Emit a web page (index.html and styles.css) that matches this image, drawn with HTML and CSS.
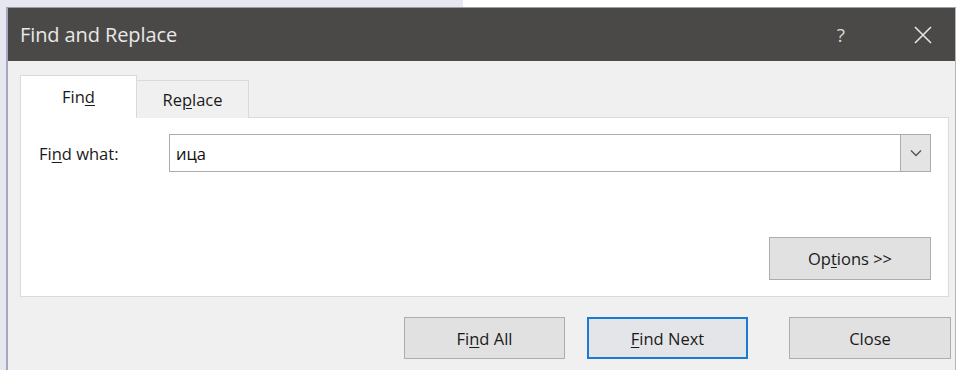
FILE: index.html
```html
<!DOCTYPE html>
<html>
<head>
<meta charset="utf-8">
<link rel="stylesheet" href="styles.css">
</head>
<body>
<div class="top">
  <div class="top-left"></div>
  <div class="top-right"></div>
</div>
<div class="frame">
  <div class="lside"></div>
  <div class="dialog">
    <div class="titlebar">
      <span class="title">Find and Replace</span>
      <span class="help">?</span>
      <svg class="close-x" width="20" height="20" viewBox="0 0 20 20">
        <path d="M2 2 L18 18 M18 2 L2 18" stroke="#e6e6e6" stroke-width="1.6" fill="none"/>
      </svg>
    </div>
    <div class="content">
      <div class="tabs">
        <div class="tab active">Fin<u>d</u></div>
        <div class="tab">Re<u>p</u>lace</div>
      </div>
      <div class="panel">
        <div class="find-row">
          <label class="label">Fi<u>n</u>d what:</label>
          <div class="combo">
            <span class="combo-text">ица</span>
            <div class="combo-btn">
              <svg width="12" height="8" viewBox="0 0 12 8">
                <path d="M1 1.5 L6 6.5 L11 1.5" stroke="#555" stroke-width="1.4" fill="none"/>
              </svg>
            </div>
          </div>
        </div>
        <div class="options-row">
          <button class="btn options">Op<u>t</u>ions &gt;&gt;</button>
        </div>
      </div>
      <div class="actions">
        <button class="btn find-all">Fi<u>n</u>d All</button>
        <button class="btn find-next default"><u>F</u>ind Next</button>
        <button class="btn close">Close</button>
      </div>
    </div>
  </div>
  <div class="rside"></div>
</div>
</body>
</html>
```
FILE: styles.css
```css
* { box-sizing: border-box; }
html, body {
  margin: 0;
  padding: 0;
  width: 961px;
  height: 370px;
  overflow: hidden;
  background: #ffffff;
  font-family: "Open Sans", "Noto Sans", sans-serif;
  color: #1a1a1a;
}
u { text-decoration: underline; text-underline-offset: 2px; text-decoration-thickness: 1px; }

.top {
  display: flex;
  height: 7px;
}
.top-left { width: 463px; background: #e7e7f1; }
.top-right { flex: 1; background: #ffffff; }

.frame {
  display: flex;
  height: 363px;
}
.lside { width: 6px; background: #e7e7f1; }
.rside { flex: 1; background: #ffffff; }

.dialog {
  width: 950px;
  border-top: 1px solid #9c9cab;
  border-left: 2px solid #a5a8bd;
  border-right: 1px solid #b4b4b4;
  background: #f0f0f0;
  display: flex;
  flex-direction: column;
}

.titlebar {
  height: 53px;
  background: #4b4947;
  display: flex;
  align-items: center;
  padding-left: 12px;
  color: #e8e8e8;
}
.title {
  font-size: 20px;
  flex: 1;
  letter-spacing: -0.1px;
}
.help {
  font-size: 19px;
  color: #d8d8d8;
  margin-right: 68px;
}
.close-x {
  margin-right: 22px;
}

.content {
  padding: 14px 6px 0 12px;
}

.tabs {
  display: flex;
  align-items: flex-end;
  height: 43px;
  margin-bottom: -1px;
  position: relative;
  z-index: 1;
}
.tab {
  font-size: 16.5px;
  display: flex;
  align-items: center;
  justify-content: center;
}
.tab.active {
  width: 117px;
  height: 43px;
  background: #ffffff;
  border: 1px solid #dadada;
  border-bottom: none;
  padding-bottom: 2px;
}
.tab:not(.active) {
  width: 112px;
  height: 38px;
  background: #f0f0f0;
  border: 1px solid #dadada;
  border-left: none;
  border-bottom: none;
}

.panel {
  height: 180px;
  background: #ffffff;
  border: 1px solid #dadada;
  padding: 16px 17px 16px 18px;
  display: flex;
  flex-direction: column;
  justify-content: space-between;
}

.find-row {
  display: flex;
  align-items: center;
}
.label {
  width: 130px;
  font-size: 16.5px;
}
.combo {
  flex: 1;
  height: 38px;
  border: 1px solid #acacac;
  display: flex;
  align-items: center;
  background: #ffffff;
}
.combo-text {
  flex: 1;
  padding-left: 6px;
  font-size: 16.5px;
  color: #111;
}
.combo-btn {
  width: 30px;
  height: 36px;
  background: #e4e4e4;
  border-left: 1px solid #acacac;
  display: flex;
  align-items: center;
  justify-content: center;
}

.options-row {
  display: flex;
  justify-content: flex-end;
}

.btn {
  font-family: "Open Sans", "Noto Sans", sans-serif;
  font-size: 16.5px;
  color: #1a1a1a;
  background: #e1e1e1;
  border: 1px solid #adadad;
  height: 43px;
  padding: 0;
  display: flex;
  align-items: center;
  justify-content: center;
}
.options { width: 162px; }

.actions {
  display: flex;
  justify-content: flex-end;
  padding-top: 20px;
  margin-right: -2px;
}
.actions .btn { height: 42px; }
.find-all { width: 161px; margin-right: 22px; }
.find-next { width: 161px; margin-right: 41px; }
.default {
  border: 2px solid #1a7ad4;
  background: #e3e5e8;
}
.close { width: 162px; }
```
